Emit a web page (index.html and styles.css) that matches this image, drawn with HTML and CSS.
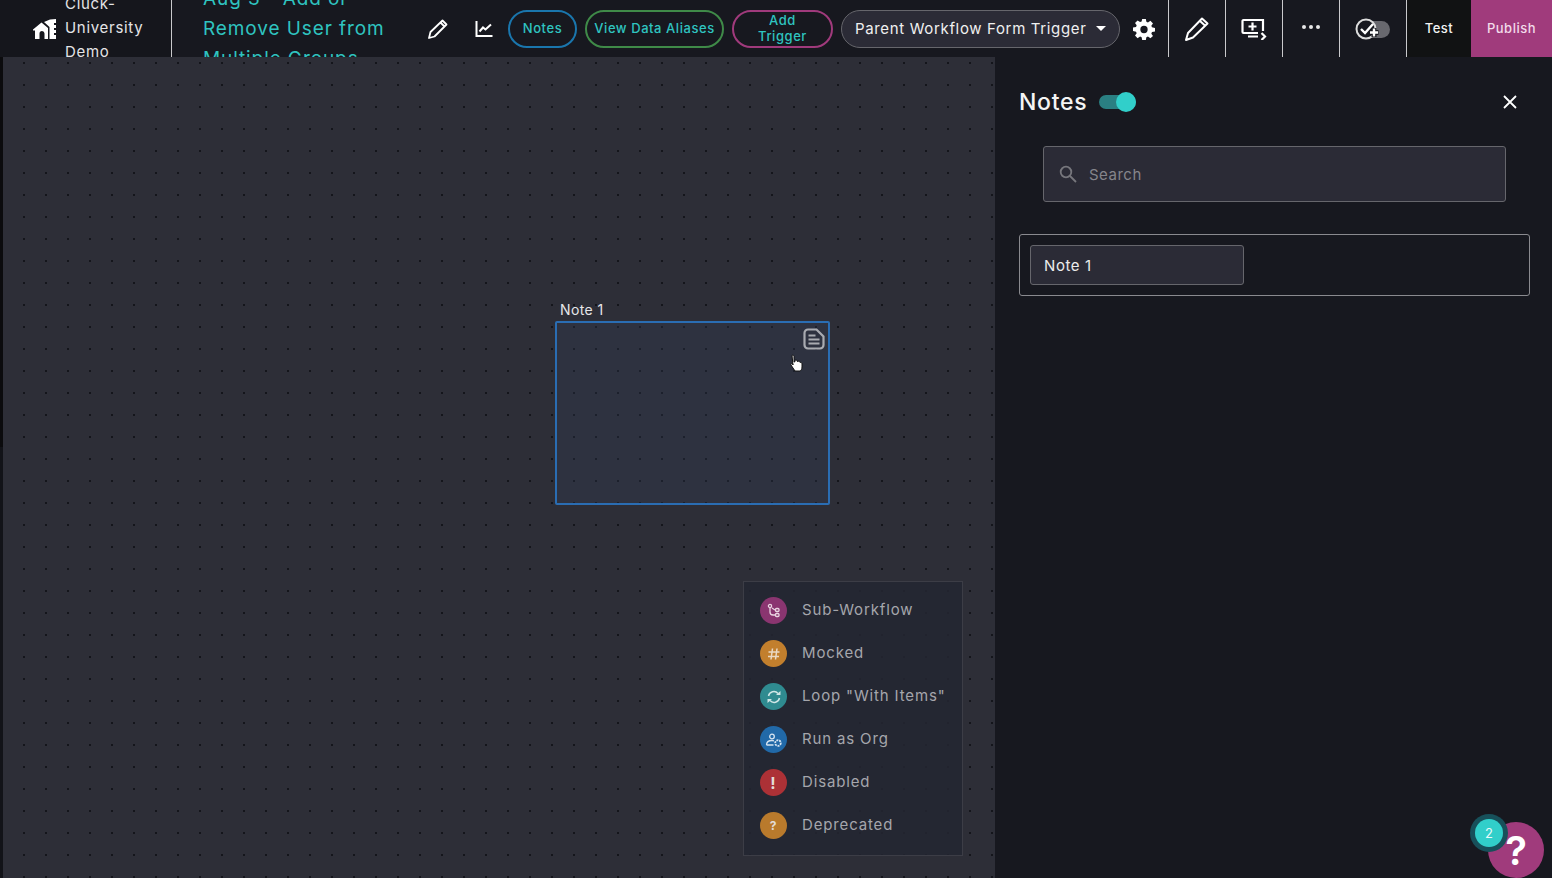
FILE: index.html
```html
<!DOCTYPE html>
<html lang="en">
<head>
    <meta charset="UTF-8">
    <meta name="viewport" content="width=device-width, initial-scale=1.0">
    <title>Workflow Notes</title>
    <link rel="stylesheet" href="styles.css">
</head>
<body>
<header class="topbar">
    <div class="org">
        <svg class="org-icon" width="24" height="20" viewBox="0 0 24 20">
            <path fill="#fff" d="M0 10.500 8.500 3.500 15 9v11h-3.500v-5.500a2.500 2.500 0 0 0-5 0V20H2v-8.500H0z"/>
            <path fill="#fff" d="M11 3 17 0.500 23 0v4h-2v2h2v3h-2v2h2v3h-2v2h2v4h-6.500V8z"/>
        </svg>
        <div class="org-name">Cluck-University Demo</div>
    </div>
    <div class="title-wrap">
        <div class="title">Aug 3 - Add or Remove User from Multiple Groups</div>
    </div>
    <button class="icon-btn pencil-btn">
        <svg width="22" height="22" viewBox="0 0 22 22" fill="none" stroke="#fff" stroke-width="1.800" stroke-linejoin="round">
            <path d="M2 20 3.500 14 15.500 2.500 19.500 6.500 7.500 18.500zM13.500 4.500l4 4"/>
        </svg>
    </button>
    <button class="icon-btn chart-btn">
        <svg width="18" height="18" viewBox="0 0 18 18" fill="none" stroke="#fff" stroke-width="2">
            <path d="M1.500 1v15h16"/>
            <path d="M4.500 11.500 8 7.500l2.500 2L16 4.500"/>
        </svg>
    </button>
    <button class="pill pill-blue">Notes</button>
    <button class="pill pill-green">View Data Aliases</button>
    <button class="pill pill-pink">Add Trigger</button>
    <button class="trigger-select">Parent Workflow Form Trigger<span class="caret"></span></button>
    <button class="icon-btn gear-btn">
        <svg width="22" height="22" viewBox="0 0 24 24">
            <path fill="#fff" fill-rule="evenodd" d="M10 1h4l.6 3.100 1.700.7L19 3l2.800 2.900-1.800 2.600.7 1.700L24 10.800v4l-3.300.6-.7 1.700 1.800 2.600L19 22l-2.700-1.800-1.700.7L14 24h-4l-.6-3.100-1.700-.7L5 22l-2.800-2.800L4 16.600l-.7-1.700L0 14.300v-4l3.300-.6.700-1.700L2.200 5.400 5 2.600l2.700 1.800 1.700-.7zM12 8.500a4 4 0 1 0 0 8 4 4 0 0 0 0-8z"/>
        </svg>
    </button>
    <div class="tool">
        <svg width="26" height="26" viewBox="0 0 26 26" fill="none" stroke="#fff" stroke-width="2" stroke-linejoin="round">
            <path d="M2 24 4 17 18 2.500 23.500 7.500 9 21.500zM16 5l5.500 5"/>
        </svg>
    </div>
    <div class="tool">
        <svg width="26" height="22" viewBox="0 0 26 22" fill="none" stroke="#fff" stroke-width="2.200">
            <path d="M22 13V2H2.500a1 1 0 0 0-1 1v11a1 1 0 0 0 1 1H17"/>
            <path d="M11.500 4.500v8M7.500 8.500h8M7 18.500h10M20.500 15l3.500 3.500-3.500 3.500"/>
        </svg>
    </div>
    <div class="tool dots">
        <span></span><span></span><span></span>
    </div>
    <div class="tool tool-wide">
        <svg width="36" height="22" viewBox="0 0 36 22">
            <rect x="9" y="3" width="26" height="17" rx="8.500" fill="#68686e"/>
            <circle cx="11" cy="11" r="9.500" fill="#17181f" stroke="#ddd" stroke-width="2"/>
            <path d="M6 11l4 4 8-9" fill="none" stroke="#fff" stroke-width="2.400"/>
            <path d="M19 10v9M14.500 14.500h9" stroke="#17181f" stroke-width="5"/>
            <path d="M19 10.500v8M15 14.500h8" stroke="#fff" stroke-width="2.400"/>
        </svg>
    </div>
    <button class="test-btn">Test</button>
    <button class="publish-btn">Publish</button>
</header>

<main class="main">
    <section class="canvas">
        <div class="note">
            <div class="note-label">Note 1</div>
            <div class="note-box">
                <svg class="note-icon" width="22" height="22" viewBox="0 0 22 22" fill="none" stroke="#a9abb1" stroke-width="2.200">
                    <path d="M5 1.500h8.500l7 7V17a3.500 3.500 0 0 1-3.500 3.500H5A3.500 3.500 0 0 1 1.500 17V5A3.500 3.500 0 0 1 5 1.500z"/>
                    <path d="M5.500 7.500h7M5.500 11.500h11M5.500 15.500h11"/>
                </svg>
            </div>
        </div>
        <svg class="cursor" width="14" height="18" viewBox="0 0 14 18">
            <path fill="#fff" stroke="#111" stroke-width="1" d="M3 1.500c1-.8 2 0 2 1V8l1-.3V6.500c1-.8 2-.3 2 .7l1 .2c1-.5 1.800 0 1.800.8l.9.3c.8 0 1.300.5 1.300 1.500v3c0 2-1 3.500-2 4H6l-4-6c-.5-1 .5-2 1.500-1.200L4 11z"/>
        </svg>
        <ul class="legend">
            <li class="legend-row">
                <span class="badge badge-purple">
                    <svg width="16" height="16" viewBox="0 0 16 16" fill="none" stroke="#e9d5e2" stroke-width="1.300"><circle cx="4" cy="3" r="1.600"/><path d="M4 4.500V9c0 2 1 3 3 3h2M6 5l3 2"/><rect x="9.500" y="5.500" width="3.500" height="3" rx="1"/><rect x="9.500" y="10.500" width="3.500" height="3" rx="1"/></svg>
                </span>
                Sub-Workflow
            </li>
            <li class="legend-row">
                <span class="badge badge-orange">
                    <svg width="14" height="14" viewBox="0 0 14 14" fill="none" stroke="#ead9c3" stroke-width="1.500"><path d="M5.500 1.500 4 12.500M10 1.500 8.500 12.500M1.500 5H12.500M1 9.500H12"/></svg>
                </span>
                Mocked
            </li>
            <li class="legend-row">
                <span class="badge badge-teal">
                    <svg width="16" height="16" viewBox="0 0 16 16" fill="none" stroke="#cfe6e6" stroke-width="1.500"><path d="M2.500 7A5.500 5.500 0 0 1 12 4.500M13.500 9A5.500 5.500 0 0 1 4 11.500"/><path fill="#cfe6e6" stroke="none" d="M10 6h4.500V2zM6 10H1.500v4z"/></svg>
                </span>
                Loop "With Items"
            </li>
            <li class="legend-row">
                <span class="badge badge-blue">
                    <svg width="18" height="16" viewBox="0 0 18 16" fill="none" stroke="#d5e3f0" stroke-width="1.300"><circle cx="7" cy="4.500" r="2.300"/><path d="M1.500 13c0-3 2.500-4.500 5.500-4.500.7 0 1.300.1 2 .3M1.500 13h7"/><circle cx="13" cy="11" r="2.800" stroke-dasharray="2 .8" stroke-width="1.800"/></svg>
                </span>
                Run as Org
            </li>
            <li class="legend-row">
                <span class="badge badge-red">!</span>
                Disabled
            </li>
            <li class="legend-row">
                <span class="badge badge-amber">?</span>
                Deprecated
            </li>
        </ul>
    </section>

    <aside class="notes-panel">
        <div class="panel-head">
            <h2 class="panel-title">Notes</h2>
            <span class="switch"><span class="switch-knob"></span></span>
            <svg class="panel-close" width="16" height="16" viewBox="0 0 16 16" stroke="#fff" stroke-width="1.800">
                <path d="M2 2l12 12M14 2 2 14"/>
            </svg>
        </div>
        <div class="search">
            <svg width="18" height="18" viewBox="0 0 18 18" fill="none" stroke="#77777d" stroke-width="1.800">
                <circle cx="7" cy="7" r="5.300"/>
                <path d="M11 11l6 6"/>
            </svg>
            <span>Search</span>
        </div>
        <div class="note-list">
            <div class="note-item">Note 1</div>
        </div>
    </aside>
</main>

<div class="help">
    <span class="help-count">2</span>
    <span class="help-btn">?</span>
</div>
</body>
</html>
```

FILE: styles.css
```css
* {
    box-sizing: border-box;
}
html, body {
    height: 100%;
}
body {
    margin: 0;
    background: #17181f;
    color: #fff;
    font-family: Inter, "Liberation Sans", sans-serif;
    overflow: hidden;
    display: flex;
    flex-direction: column;
}
button {
    font-family: inherit;
    cursor: pointer;
}

/* top bar */
.topbar {
    height: 57px;
    flex: none;
    display: flex;
    align-items: center;
    background: #17181f;
    overflow: hidden;
}
.org {
    width: 172px;
    height: 100%;
    flex: none;
    display: flex;
    align-items: center;
    padding-left: 33px;
    border-right: 1px solid #c9c9cc;
    background: #15161c;
}
.org-icon {
    flex: none;
    margin-right: 8px;
}
.org-name {
    width: 90px;
    font-size: 15px;
    line-height: 24px;
    letter-spacing: 0.7px;
    padding-bottom: 2px;
    color: #e4e4e6;
}
.title-wrap {
    width: 244px;
    height: 100%;
    flex: none;
    display: flex;
    align-items: center;
    padding-left: 31px;
}
.title {
    font-size: 19px;
    line-height: 30px;
    width: 196px;
    letter-spacing: 0.9px;
    color: #2fc4c0;
}
.icon-btn {
    background: none;
    border: none;
    padding: 0;
    display: flex;
    align-items: center;
    justify-content: center;
    flex: none;
}
.pencil-btn {
    width: 44px;
}
.chart-btn {
    width: 48px;
}
.pill {
    height: 38px;
    flex: none;
    background: none;
    border: 2px solid;
    border-radius: 19px;
    color: #2fc4c0;
    font-size: 13px;
    line-height: 16px;
    letter-spacing: 0.55px;
    padding: 0 4px 2px;
    font-weight: 500;
}
.pill-blue {
    width: 69px;
    border-color: #1a76ad;
}
.pill-green {
    width: 139px;
    margin-left: 8px;
    border-color: #3f8a48;
}
.pill-pink {
    width: 101px;
    margin-left: 8px;
    padding: 0 20px 2px;
    border-color: #a03a7c;
}
.trigger-select {
    width: 279px;
    height: 38px;
    flex: none;
    margin-left: 8px;
    padding: 0 13px 1px;
    display: flex;
    align-items: center;
    justify-content: space-between;
    background: #2b2b36;
    border: 1px solid #66666c;
    border-radius: 19px;
    color: #f0f0f0;
    font-size: 15px;
    letter-spacing: 0.65px;
}
.caret {
    width: 0;
    height: 0;
    border-left: 5px solid transparent;
    border-right: 5px solid transparent;
    border-top: 5px solid #fff;
}
.gear-btn {
    width: 48px;
    height: 100%;
}
.tool {
    width: 57px;
    height: 100%;
    flex: none;
    display: flex;
    align-items: center;
    justify-content: center;
    border-left: 1px solid #c9c9cc;
}
.tool-wide {
    width: 67px;
}
.dots {
    gap: 3px;
    padding-bottom: 3px;
}
.dots span {
    width: 4px;
    height: 4px;
    border-radius: 50%;
    background: #e8e8e8;
}
.test-btn, .publish-btn {
    height: 100%;
    flex: none;
    border: none;
    padding: 0 0 2px;
    font-size: 13px;
    font-weight: 500;
    letter-spacing: 0.5px;
    color: #f2f2f2;
}
.test-btn {
    width: 65px;
    background: #111213;
    border-left: 1px solid #c9c9cc;
}
.publish-btn {
    width: 81px;
    background: #a03b7c;
    color: #f2dcea;
}

/* main area */
.main {
    flex: 1;
    display: flex;
    min-height: 0;
    background: linear-gradient(#0b0b0d 390px, #121318 390px);
}
.canvas {
    position: relative;
    flex: 1;
    margin-left: 3px;
    background-color: #2d2e37;
    background-image: radial-gradient(circle at center, #14151b 0, #14151b 1px, transparent 1.3px);
    background-size: 22px 22px;
    background-position: 10px -5px;
}
.note {
    position: absolute;
    left: 552px;
    top: 244px;
    width: 275px;
}
.note-label {
    font-size: 14px;
    line-height: 17px;
    letter-spacing: 0.4px;
    margin-left: 5px;
    margin-bottom: 3px;
    color: #e6e6e8;
}
.note-box {
    position: relative;
    height: 184px;
    background: rgba(50, 62, 88, 0.28);
    border: 2px solid #2a6db3;
    border-radius: 2px;
}
.note-icon {
    position: absolute;
    right: 3px;
    top: 5px;
}
.cursor {
    position: absolute;
    left: 786px;
    top: 297px;
}
.legend {
    position: absolute;
    left: 740px;
    top: 524px;
    width: 220px;
    height: 275px;
    margin: 0;
    padding: 6px 0 0 16px;
    list-style: none;
    background: rgba(35, 38, 49, 0.85);
    border: 1px solid #3c3d46;
}
.legend-row {
    height: 43px;
    display: flex;
    align-items: center;
    gap: 15px;
    font-size: 15px;
    letter-spacing: 0.85px;
    color: #a5a6ac;
    white-space: nowrap;
}
.badge {
    width: 27px;
    height: 27px;
    flex: none;
    margin-top: 2px;
    border-radius: 50%;
    display: flex;
    align-items: center;
    justify-content: center;
    font-size: 12px;
    font-weight: 700;
    color: #e3dcd8;
}
.badge-purple { background: #8a3570; }
.badge-orange { background: #c27f2d; }
.badge-teal { background: #2f8b90; }
.badge-blue { background: #2169a8; }
.badge-red { background: #ac3136; font-size: 16px; }
.badge-amber { background: #b97a2c; }

/* notes panel */
.notes-panel {
    width: 557px;
    flex: none;
    padding: 0 22px 0 24px;
    background: #17181f;
}
.panel-head {
    height: 89px;
    display: flex;
    align-items: center;
    gap: 12px;
}
.panel-title {
    margin: 0;
    font-size: 23px;
    font-weight: 500;
    letter-spacing: 0.7px;
    color: #f4f4f4;
}
.switch {
    position: relative;
    width: 37px;
    height: 14px;
    border-radius: 7px;
    background: #2a7f82;
}
.switch-knob {
    position: absolute;
    right: 0;
    top: -3px;
    width: 20px;
    height: 20px;
    border-radius: 50%;
    background: #31cfca;
}
.panel-close {
    margin-left: auto;
    margin-right: 12px;
}
.search {
    height: 56px;
    margin-left: 24px;
    margin-right: 24px;
    padding-left: 15px;
    display: flex;
    align-items: center;
    gap: 12px;
    background: #2b2b36;
    border: 1px solid #66666c;
    border-radius: 3px;
    color: #85858b;
    font-size: 15px;
    letter-spacing: 0.5px;
}
.note-list {
    height: 62px;
    margin-top: 32px;
    padding: 10px;
    background: #17181f;
    border: 1px solid #8a8a8f;
    border-radius: 3px;
}
.note-item {
    width: 214px;
    height: 40px;
    padding-left: 13px;
    display: flex;
    align-items: center;
    background: #2b2b36;
    border: 1px solid #66666c;
    border-radius: 3px;
    font-size: 15px;
    letter-spacing: 0.6px;
    color: #ececec;
}

/* help button */
.help {
    position: absolute;
    right: 8px;
    bottom: 0;
    width: 74px;
    height: 63px;
}
.help-btn {
    position: absolute;
    right: 0;
    bottom: 0;
    width: 56px;
    height: 56px;
    border-radius: 50%;
    background: #a03b7c;
    display: flex;
    align-items: center;
    justify-content: center;
    font-size: 40px;
    font-weight: 600;
    color: #fff;
}
.help-count {
    position: absolute;
    left: 5px;
    top: 4px;
    z-index: 1;
    width: 28px;
    height: 28px;
    border-radius: 50%;
    background: #31cfca;
    box-shadow: 0 0 0 5px #17505a;
    display: flex;
    align-items: center;
    justify-content: center;
    font-size: 13px;
    color: #eafafa;
}
```
